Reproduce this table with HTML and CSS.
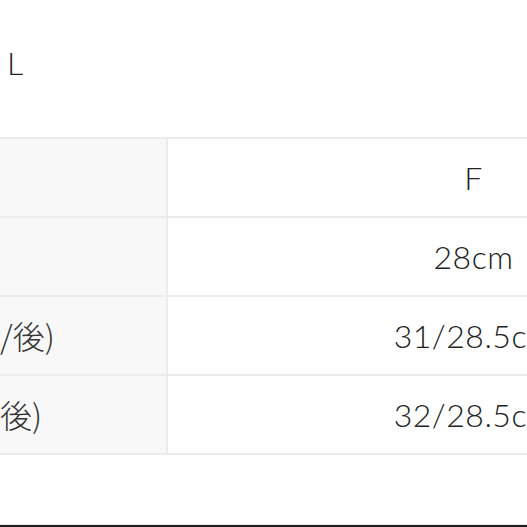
FILE: index.html
```html
<!DOCTYPE html>
<html lang="ja">
<head>
<meta charset="utf-8">
<title>サイズ表</title>
<link rel="stylesheet" href="styles.css">
</head>
<body>
<div class="page">
  <p class="sizes">L</p>
  <table class="size-table">
    <colgroup><col class="col-label"><col class="col-value"></colgroup>
    <tbody>
      <tr><th>サイズ</th><td>F</td></tr>
      <tr><th>肩幅</th><td>28cm</td></tr>
      <tr><th>身幅(前/後)</th><td>31/28.5cm</td></tr>
      <tr><th>裾幅(前後)</th><td>32/28.5cm</td></tr>
    </tbody>
  </table>
  <div class="rule"></div>
</div>
</body>
</html>
```

FILE: styles.css
```css
html, body {
  margin: 0;
  padding: 0;
  background: #ffffff;
}

.page {
  width: 527px;
  height: 527px;
  overflow: hidden;
  position: relative;
  font-family: "Lato", "Noto Sans CJK JP", sans-serif;
  font-weight: 300;
  color: #222222;
}

.sizes {
  margin: 0;
  padding: 39px 0 0 7px;
  font-size: 32px;
  line-height: 48px;
}

.size-table {
  border-collapse: collapse;
  table-layout: fixed;
  width: 909px;
  margin: 50px 0 0 -130px;
  font-size: 32px;
  line-height: 47px;
}

.col-label { width: 296px; }
.col-value { width: 613px; }

.size-table th,
.size-table td {
  border: 2px solid #ececec;
  padding: 15px 0;
  font-weight: 300;
  white-space: nowrap;
}

.size-table th {
  background: #f8f8f8;
  text-align: left;
  padding-left: 22px;
  color: #333333;
  font-family: "Noto Sans CJK JP", sans-serif;
}

.size-table td {
  text-align: center;
  letter-spacing: 0.5px;
  background: #ffffff;
}

.rule {
  position: absolute;
  left: 0;
  right: 0;
  top: 524px;
  height: 1px;
  background: #ededed;
  border-bottom: 2px solid #1c1c1c;
}
```
